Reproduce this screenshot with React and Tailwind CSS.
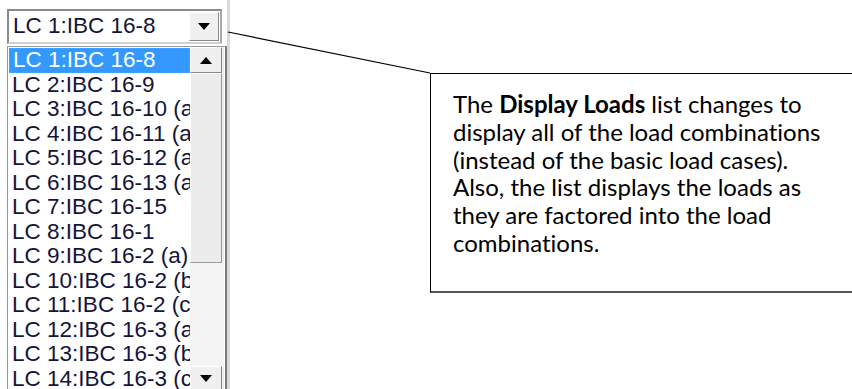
const ITEMS = [
  "LC 1:IBC 16-8",
  "LC 2:IBC 16-9",
  "LC 3:IBC 16-10 (a)",
  "LC 4:IBC 16-11 (a)",
  "LC 5:IBC 16-12 (a)",
  "LC 6:IBC 16-13 (a)",
  "LC 7:IBC 16-15",
  "LC 8:IBC 16-1",
  "LC 9:IBC 16-2 (a)",
  "LC 10:IBC 16-2 (b)",
  "LC 11:IBC 16-2 (c)",
  "LC 12:IBC 16-3 (a)",
  "LC 13:IBC 16-3 (b)",
  "LC 14:IBC 16-3 (c)",
];

function Arrow({ up }) {
  return (
    <svg width="12" height="7" viewBox="0 0 12 7">
      <polygon points={up ? "6,0 12,7 0,7" : "0,0 12,0 6,7"} fill="#000" />
    </svg>
  );
}

function ScrollButton({ up, className = "" }) {
  return (
    <div
      className={`flex items-center justify-center border border-t-white border-l-white border-r-[#888] border-b-[#888] bg-[#f0f0f0] ${className}`}
    >
      <Arrow up={up} />
    </div>
  );
}

function LoadList() {
  return (
    <div className="w-[230px] shrink-0 border-r-[3px] border-[#d9d9d9] pl-[7px] pt-[9px] font-['Liberation_Sans',Arial,sans-serif]">
      <div className="flex h-[35px] w-[215px] items-center border-2 border-t-[#8a8a8a] border-l-[#8a8a8a] border-r-[#a8a8a8] border-b-[#d0d0d0] bg-white">
        <span className="flex-1 pl-[4px] text-[22.5px] leading-none text-[#14143a]">LC 1:IBC 16-8</span>
        <ScrollButton up={false} className="mr-[1px] h-[29px] w-[30px] border-r-[#777] border-b-[#777]" />
      </div>

      <div className="mt-[2px] flex h-[345px] w-[220px] overflow-hidden border-l border-t border-[#9a9a9a] border-r-2 border-r-[#7a7a7a] bg-white">
        <div className="w-[182px] shrink-0 overflow-hidden pl-[1px] pt-[1px]">
          {ITEMS.map((item, i) => (
            <div
              key={item}
              className={`flex h-[24.5px] items-center whitespace-nowrap pl-[3px] text-[22.5px] leading-none ${
                i === 0
                  ? "border border-dotted border-[#d88a2a] bg-[#3399ff] pl-[2px] text-white"
                  : "text-[#14143a]"
              }`}
            >
              {item}
            </div>
          ))}
        </div>
        <div className="flex w-[34px] flex-col bg-[#ededed]">
          <ScrollButton up className="h-[26px] w-[32px]" />
          <div className="h-[190px] w-[32px] border border-t-white border-l-white border-r-[#999] border-b-[#999] bg-[#ececec]" />
          <div className="flex-1 bg-[#f4f4f4]" />
          <ScrollButton up={false} className="h-[25px] w-[32px]" />
        </div>
      </div>
    </div>
  );
}

export default function App() {
  return (
    <div className="relative flex h-[389px] w-[852px] overflow-hidden bg-white">
      <LoadList />

      <svg className="absolute left-0 top-0" width="852" height="389">
        <line x1="228" y1="32" x2="430" y2="73" stroke="#000" strokeWidth="1.2" />
      </svg>

      <div className="pl-[200px] pt-[73px]">
        <div className="h-[220px] w-[440px] whitespace-nowrap border-l border-t border-black border-b-2 border-b-[#555] pl-[22px] pt-[16px] font-['Lato',sans-serif] text-[24px] leading-[27.8px] text-black [font-variant-ligatures:none]">
          The <b>Display Loads</b> list changes to
          <br />
          display all of the load combinations
          <br />
          (instead of the basic load cases).
          <br />
          Also, the list displays the loads as
          <br />
          they are factored into the load
          <br />
          combinations.
        </div>
      </div>
    </div>
  );
}
